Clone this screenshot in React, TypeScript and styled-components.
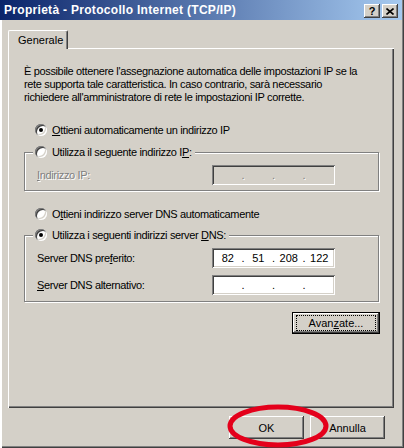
import React from 'react';
import styled, { createGlobalStyle } from 'styled-components';

const face = '#d4d0c8';
const shadow = '#808080';
const dark = '#404040';

const GlobalStyle = createGlobalStyle`
  * { box-sizing: border-box; }
  body {
    margin: 0;
    background: ${face};
  }
`;

const Window = styled.div`
  position: relative;
  width: 404px;
  height: 448px;
  display: flex;
  flex-direction: column;
  background: ${face};
  box-shadow: inset 2px 0 0 #fff, inset -1px -1px 0 ${dark}, inset -2px -2px 0 ${shadow};
  font-family: 'Liberation Sans', Arial, sans-serif;
  font-size: 11px;
  letter-spacing: -0.35px;
  color: #000;
  overflow: hidden;
`;

const TitleBar = styled.div`
  height: 20px;
  margin-right: 2px;
  padding: 0 4px 0 4px;
  display: flex;
  align-items: center;
  gap: 2px;
  background: linear-gradient(to right, #0a246a, #a6caf0);
  color: #fff;
  font-size: 12px;
  font-weight: bold;
  letter-spacing: 0.3px;
`;

const Title = styled.span`
  flex: 1;
  white-space: nowrap;
`;

const CaptionButton = styled.div`
  width: 16px;
  height: 14px;
  margin-top: 2px;
  display: flex;
  align-items: center;
  justify-content: center;
  background: ${face};
  color: #000;
  font-size: 11px;
  font-weight: bold;
  letter-spacing: 0;
  box-shadow: inset -1px -1px 0 ${dark}, inset 1px 1px 0 #fff, inset -2px -2px 0 ${shadow};
`;

const Body = styled.div`
  flex: 1;
  display: flex;
  flex-direction: column;
  padding: 10px 10px 0 8px;
`;

const TabStrip = styled.div`
  display: flex;
`;

const Tab = styled.div`
  position: relative;
  z-index: 1;
  height: 19px;
  width: 60px;
  margin-bottom: -1px;
  padding-left: 9px;
  display: flex;
  align-items: center;
  background: ${face};
  border-top: 1px solid #fff;
  border-left: 1px solid #fff;
  border-right: 1px solid ${dark};
  border-radius: 2px 2px 0 0;
  box-shadow: inset -1px 0 0 ${shadow};
  letter-spacing: 0;
`;

const Panel = styled.div`
  height: 360px;
  display: flex;
  flex-direction: column;
  padding: 17px 15px 0 16px;
  box-shadow: inset 1px 1px 0 #fff, inset -1px -1px 0 ${dark}, inset -2px -2px 0 ${shadow};
`;

const Intro = styled.div`
  line-height: 13px;
`;

const Line = styled.div`
  white-space: nowrap;
`;

const RadioRow = styled.div<{ $top?: number; $indent?: number }>`
  display: flex;
  align-items: center;
  gap: 5px;
  height: 16px;
  margin-top: ${p => p.$top ?? 0}px;
  margin-left: ${p => p.$indent ?? 0}px;
  white-space: nowrap;
`;

const RadioCircle = styled.span`
  width: 12px;
  height: 12px;
  flex: none;
  display: flex;
  align-items: center;
  justify-content: center;
  border-radius: 50%;
  background: #fff;
  box-shadow: inset 1px 1px 0 ${shadow}, inset -1px -1px 0 #fff, inset 2px 2px 0 ${dark}, inset -2px -2px 0 ${face};
`;

const RadioDot = styled.span`
  width: 4px;
  height: 4px;
  border-radius: 50%;
  background: #000;
`;

const GroupBox = styled.div<{ $top: number; $bottom: number }>`
  margin-top: ${p => p.$top}px;
  padding: 0 0 ${p => p.$bottom}px 12px;
  display: flex;
  flex-direction: column;
  gap: 7px;
  border: 1px solid ${shadow};
  box-shadow: inset 1px 1px 0 #fff, 1px 1px 0 #fff;
`;

const GroupCaption = styled.div`
  align-self: flex-start;
  margin: -9px 0 -2px -4px;
  padding: 0 3px 0 2px;
  background: ${face};
`;

const FieldRow = styled.div`
  display: grid;
  grid-template-columns: 175px 123px;
  align-items: center;
`;

const FieldLabel = styled.span<{ $disabled?: boolean }>`
  color: ${p => (p.$disabled ? shadow : '#000')};
  text-shadow: ${p => (p.$disabled ? '1px 1px 0 #fff' : 'none')};
  white-space: nowrap;
`;

const IpField = styled.div<{ $disabled?: boolean }>`
  height: 20px;
  padding: 0 2px;
  display: flex;
  align-items: center;
  background: ${p => (p.$disabled ? face : '#fff')};
  color: ${p => (p.$disabled ? shadow : '#000')};
  text-shadow: ${p => (p.$disabled ? '1px 1px 0 #fff' : 'none')};
  letter-spacing: 0;
  box-shadow: inset 1px 1px 0 ${shadow}, inset -1px -1px 0 #fff, inset 2px 2px 0 ${dark}, inset -2px -2px 0 ${face};
`;

const Octet = styled.span`
  flex: 1;
  text-align: center;
`;

const IpDot = styled.span`
  width: 3px;
  text-align: center;
`;

const Button = styled.div<{ $default?: boolean; $width: number }>`
  width: ${p => p.$width}px;
  height: ${p => (p.$default ? 22 : 23)}px;
  display: flex;
  align-items: center;
  justify-content: center;
  background: ${face};
  border: ${p => (p.$default ? '1px solid #000' : 'none')};
  box-shadow: inset -1px -1px 0 ${dark}, inset 1px 1px 0 #fff, inset -2px -2px 0 ${shadow};
  white-space: nowrap;
  letter-spacing: 0;
`;

const FocusRing = styled.span`
  padding: 1px 12px;
  outline: 1px dotted #000;
  outline-offset: 0;
`;

const AdvancedRow = styled.div`
  margin-top: 10px;
  margin-right: -1px;
  display: flex;
  justify-content: flex-end;
`;

const Footer = styled.div`
  margin-top: 8px;
  padding-right: 9px;
  display: flex;
  justify-content: flex-end;
  gap: 6px;
`;

const Annotation = styled.svg`
  position: absolute;
  left: 0;
  top: 0;
  pointer-events: none;
`;

const Radio: React.FC<{ checked?: boolean }> = ({ checked }) => (
  <RadioCircle>{checked && <RadioDot />}</RadioCircle>
);

const IpAddress: React.FC<{ parts?: string[]; disabled?: boolean }> = ({ parts = ['', '', '', ''], disabled }) => (
  <IpField $disabled={disabled}>
    {parts.map((part, i) => (
      <React.Fragment key={i}>
        {i > 0 && <IpDot>.</IpDot>}
        <Octet>{part}</Octet>
      </React.Fragment>
    ))}
  </IpField>
);

const CloseGlyph = () => (
  <svg width="8" height="7" viewBox="0 0 8 7">
    <path d="M0.5 0.5 L7.5 6.5 M7.5 0.5 L0.5 6.5" stroke="#000" strokeWidth="1.6" />
  </svg>
);

export default function App() {
  return (
    <Window>
      <GlobalStyle />
      <TitleBar>
        <Title>Proprietà - Protocollo Internet (TCP/IP)</Title>
        <CaptionButton>?</CaptionButton>
        <CaptionButton>
          <CloseGlyph />
        </CaptionButton>
      </TitleBar>
      <Body>
        <TabStrip>
          <Tab>Generale</Tab>
        </TabStrip>
        <Panel>
          <Intro>
            <Line>È possibile ottenere l'assegnazione automatica delle impostazioni IP se la</Line>
            <Line>rete supporta tale caratteristica. In caso contrario, sarà necessario</Line>
            <Line>richiedere all'amministratore di rete le impostazioni IP corrette.</Line>
          </Intro>

          <RadioRow $top={18} $indent={11}>
            <Radio checked />
            <span><u>O</u>ttieni automaticamente un indirizzo IP</span>
          </RadioRow>

          <GroupBox $top={14} $bottom={5}>
            <GroupCaption>
              <RadioRow>
                <Radio />
                <span>Utilizza il seguente indirizzo I<u>P</u>:</span>
              </RadioRow>
            </GroupCaption>
            <FieldRow>
              <FieldLabel $disabled><u>I</u>ndirizzo IP:</FieldLabel>
              <IpAddress disabled />
            </FieldRow>
          </GroupBox>

          <RadioRow $top={15} $indent={11}>
            <Radio />
            <span>O<u>t</u>tieni indirizzo server DNS automaticamente</span>
          </RadioRow>

          <GroupBox $top={13} $bottom={6}>
            <GroupCaption>
              <RadioRow>
                <Radio checked />
                <span>Utilizza i seguenti indirizzi server <u>D</u>NS:</span>
              </RadioRow>
            </GroupCaption>
            <FieldRow>
              <FieldLabel>Server DNS pre<u>f</u>erito:</FieldLabel>
              <IpAddress parts={['82', '51', '208', '122']} />
            </FieldRow>
            <FieldRow>
              <FieldLabel><u>S</u>erver DNS alternativo:</FieldLabel>
              <IpAddress />
            </FieldRow>
          </GroupBox>

          <AdvancedRow>
            <Button $default $width={88}>
              <FocusRing>Avan<u>z</u>ate...</FocusRing>
            </Button>
          </AdvancedRow>
        </Panel>
        <Footer>
          <Button $width={75}>OK</Button>
          <Button $width={75}>Annulla</Button>
        </Footer>
      </Body>
      <Annotation width="404" height="448" viewBox="0 0 404 448">
        <ellipse cx="278" cy="426" rx="48" ry="19" fill="none" stroke="#e4001b" strokeWidth="5" />
      </Annotation>
    </Window>
  );
}
